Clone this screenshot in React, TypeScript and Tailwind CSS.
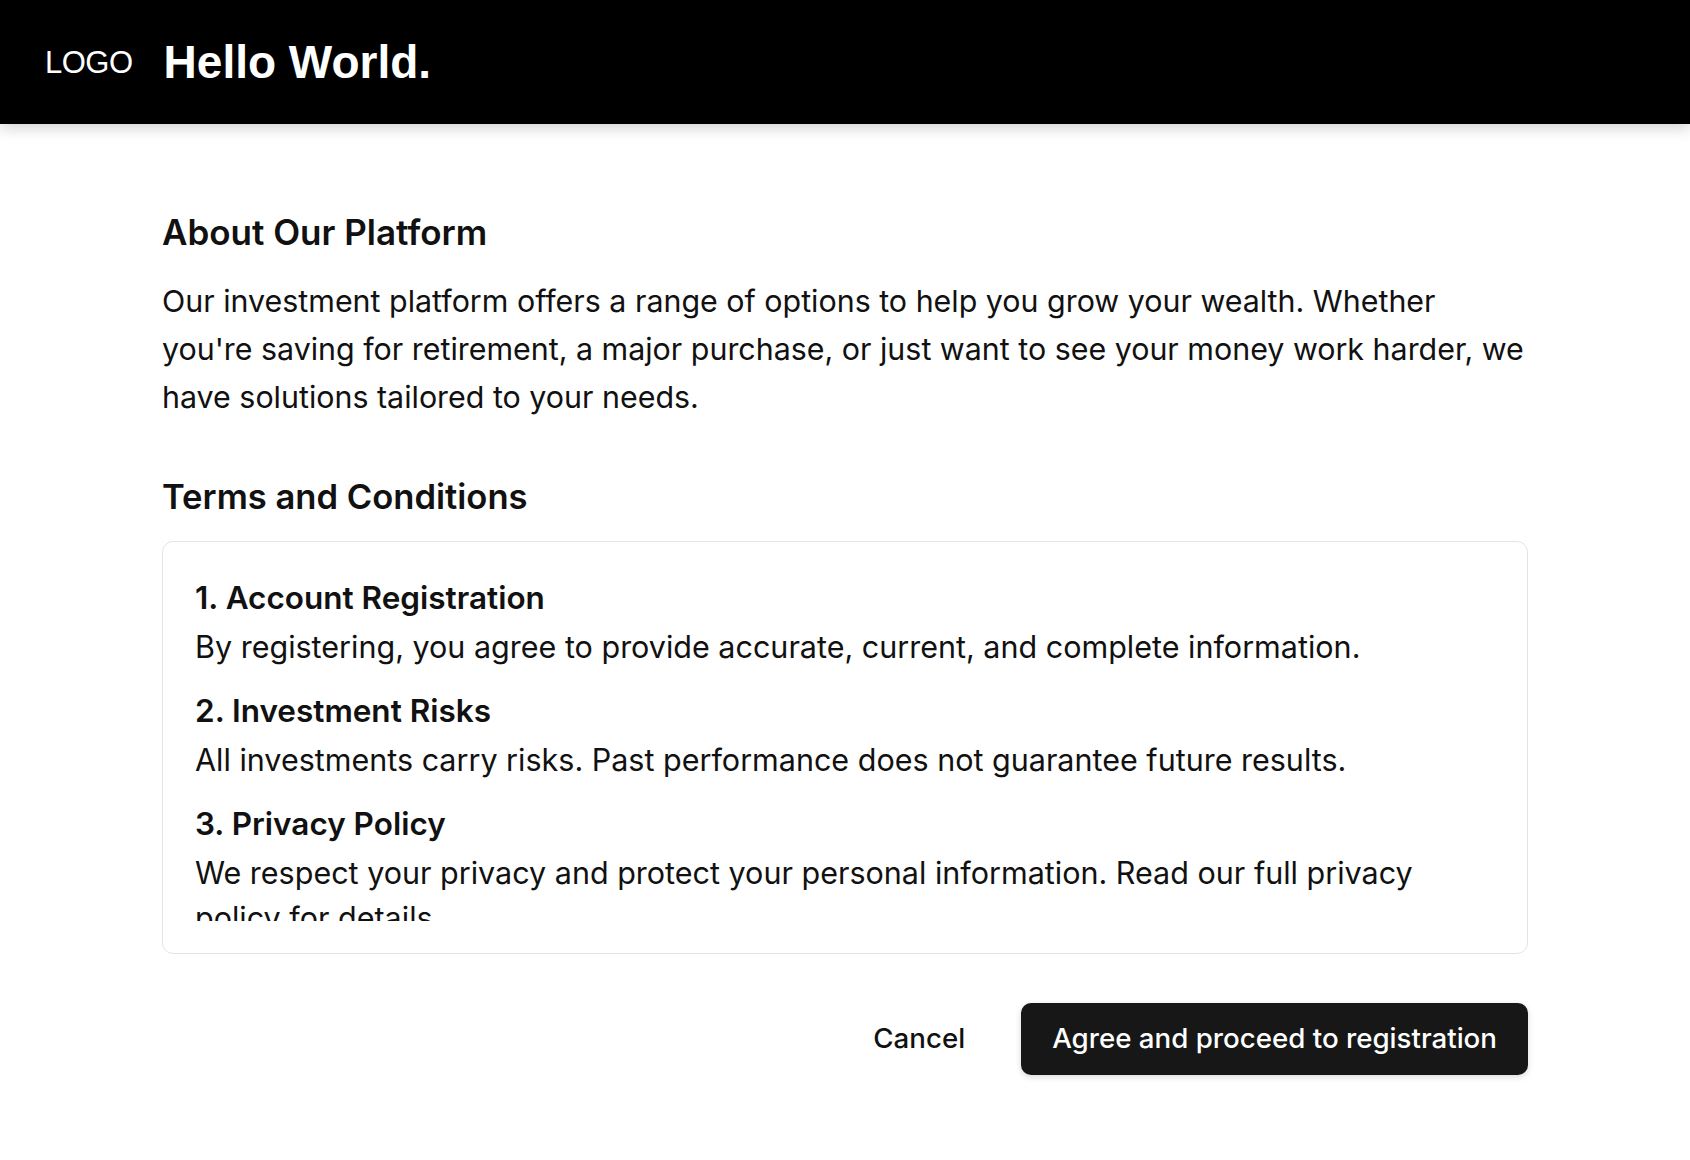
import React from 'react';

const terms = [
    {
        title: '1. Account Registration',
        body: 'By registering, you agree to provide accurate, current, and complete information.',
    },
    {
        title: '2. Investment Risks',
        body: 'All investments carry risks. Past performance does not guarantee future results.',
    },
    {
        title: '3. Privacy Policy',
        body: 'We respect your privacy and protect your personal information. Read our full privacy policy for details.',
    },
    {
        title: '4. Account Security',
        body: 'You are responsible for keeping your login credentials safe and confidential.',
    },
];

export default function App() {
    return (
        <div className="min-h-screen bg-white text-[#111111] font-['Inter',sans-serif]">
            {/* Top bar */}
            <header className="flex items-center h-[124px] bg-black pl-[45px] gap-[31px] shadow-[0_4px_14px_rgba(0,0,0,0.18)]">
                <span className="text-white text-[31px] tracking-[-0.5px] font-['Liberation_Sans',sans-serif] leading-none">
                    LOGO
                </span>
                <span className="text-white text-[46px] font-bold font-['Liberation_Sans',sans-serif] leading-none">
                    Hello World.
                </span>
            </header>

            <main className="max-w-[1366px] mx-auto pt-[88px]">
                <h2 className="text-[35px] leading-[40px] font-semibold">About Our Platform</h2>
                <p className="mt-[25px] text-[30.4px] leading-[48px]">
                    Our investment platform offers a range of options to help you grow your wealth. Whether you're
                    saving for retirement, a major purchase, or just want to see your money work harder, we have
                    solutions tailored to your needs.
                </p>

                <h2 className="mt-[55px] text-[34.6px] leading-[40px] font-semibold">Terms and Conditions</h2>
                <div className="mt-[25px] border border-[#e4e4e4] rounded-[11px] p-[32px]">
                    <div className="max-h-[347px] overflow-hidden flex flex-col gap-[18px]">
                        {terms.map((t) => (
                            <div key={t.title}>
                                <h3 className="text-[31.5px] leading-[48px] font-semibold">{t.title}</h3>
                                <p className="mt-[2px] text-[30.5px] leading-[45px]">{t.body}</p>
                            </div>
                        ))}
                    </div>
                </div>

                <div className="flex justify-end items-center mt-[49px] gap-[28px]">
                    <button className="h-[72px] px-[28px] text-[27.7px] font-medium">Cancel</button>
                    <button className="h-[72px] px-[31px] rounded-[10px] bg-[#171717] text-white text-[27.7px] font-medium shadow-[0_2px_6px_rgba(0,0,0,0.15)]">
                        Agree and proceed to registration
                    </button>
                </div>
            </main>
        </div>
    );
}
